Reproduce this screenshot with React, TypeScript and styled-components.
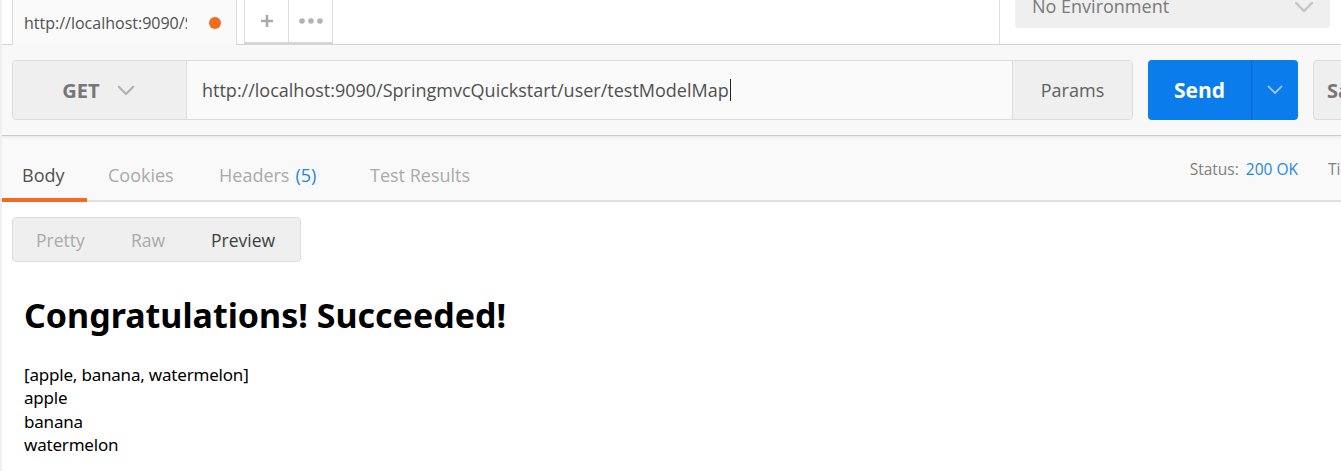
import React from "react";
import styled, { createGlobalStyle } from "styled-components";

const Global = createGlobalStyle`
  html, body { margin: 0; padding: 0; background: #ffffff; }
  body { font-family: "Open Sans", "Noto Sans", sans-serif; overflow: hidden; }
  * { box-sizing: border-box; }
`;

const Page = styled.div`
  width: 1341px;
  height: 471px;
  overflow: hidden;
  background: #fff;
  border-left: 2px solid #f0f0f0;
`;

const TopBar = styled.div`
  height: 45px;
  display: flex;
  align-items: stretch;
  border-bottom: 1px solid #d6d6d6;
  background: #fff;
`;

const TabStrip = styled.div`
  display: flex;
  align-items: stretch;
  padding-left: 10px;
  flex: 0 0 998px;
  border-right: 1px solid #dedede;
`;

const ReqTab = styled.div`
  width: 225px;
  display: flex;
  align-items: center;
  justify-content: space-between;
  padding: 0 15px 0 11px;
  background: #fafafa;
  border: 1px solid #dcdcdc;
  border-top: none;
  border-bottom: none;
  font-size: 16px;
  color: #505050;
  margin-bottom: -1px;
`;

const TabTitle = styled.span`
  width: 163px;
  overflow: hidden;
  white-space: nowrap;
`;

const Dot = styled.span`
  width: 12px;
  height: 12px;
  border-radius: 50%;
  background: #f26b21;
`;

const SmallTab = styled.div<{ $first?: boolean }>`
  width: ${(p) => (p.$first ? 45 : 44)}px;
  margin-left: ${(p) => (p.$first ? 7 : 0)}px;
  display: flex;
  align-items: center;
  justify-content: center;
  border: 1px solid #dcdcdc;
  border-left-width: ${(p) => (p.$first ? 1 : 0)}px;
  border-top: none;
  border-bottom: 2px solid #d6d6d6;
  background: #fff;
  color: #aaaaaa;
`;

const EnvWrap = styled.div`
  flex: 1;
  padding: 0 10px 0 15px;
`;

const EnvSelect = styled.div`
  height: 28px;
  width: 315px;
  background: #efefef;
  border-radius: 0 0 4px 4px;
  display: flex;
  align-items: flex-end;
  justify-content: space-between;
  padding: 0 16px 13px 17px;
  font-size: 18px;
  color: #7a7a7a;
  line-height: 1;
`;

const EnvArrow = styled.span`
  display: flex;
  margin-bottom: 2px;
`;

const RequestArea = styled.div`
  height: 91px;
  background: #f8f8f8;
  border-bottom: 1px solid #cccccc;
  box-shadow: 0 1px 3px rgba(0, 0, 0, 0.08);
  display: flex;
  align-items: flex-start;
  padding: 15px 0 0 10px;
  position: relative;
  z-index: 1;
`;

const UrlGroup = styled.div`
  display: flex;
  flex-shrink: 0;
  height: 60px;
  border: 1px solid #dcdcdc;
  border-radius: 4px;
  overflow: hidden;
`;

const Method = styled.div`
  width: 174px;
  flex-shrink: 0;
  background: #efefef;
  border-right: 1px solid #dcdcdc;
  display: flex;
  align-items: center;
  justify-content: center;
  gap: 17px;
  padding-right: 2px;
  font-size: 20px;
  font-weight: 700;
  color: #777;
`;

const UrlInput = styled.div`
  width: 825px;
  flex-shrink: 0;
  background: #fafafa;
  display: flex;
  align-items: center;
  padding-left: 15px;
  font-size: 18px;
  color: #505050;
`;

const Caret = styled.span`
  display: inline-block;
  width: 1px;
  height: 22px;
  background: #222;
  margin-left: 1px;
`;

const ParamsBtn = styled.div`
  width: 120px;
  flex-shrink: 0;
  background: #efefef;
  border-left: 1px solid #dcdcdc;
  display: flex;
  align-items: center;
  justify-content: center;
  font-size: 18px;
  color: #606060;
`;

const SendBtn = styled.div`
  margin-left: 15px;
  width: 150px;
  flex-shrink: 0;
  height: 60px;
  background: #0b7ceb;
  border-radius: 4px;
  display: flex;
  overflow: hidden;
`;

const SendLabel = styled.div`
  width: 104px;
  display: flex;
  align-items: center;
  justify-content: center;
  font-size: 21px;
  font-weight: 700;
  color: #fff;
  border-right: 1px solid #0a66c4;
`;

const SendArrow = styled.div`
  flex: 1;
  display: flex;
  align-items: center;
  justify-content: center;
`;

const SaveBtn = styled.div`
  margin-left: 15px;
  width: 120px;
  height: 60px;
  background: #efefef;
  border: 1px solid #dcdcdc;
  border-radius: 4px;
  display: flex;
  align-items: center;
  padding-left: 13px;
  font-size: 20px;
  font-weight: 700;
  color: #777;
  flex-shrink: 0;
`;

const RespTabs = styled.div`
  height: 66px;
  background: #f9f9f9;
  border-bottom: 2px solid #e0e0e0;
  display: flex;
  align-items: stretch;
`;

const RespTab = styled.div<{ $active?: boolean; $w: number; $pad: number }>`
  width: ${(p) => p.$w}px;
  display: flex;
  align-items: center;
  padding: 16px 0 0 ${(p) => p.$pad}px;
  font-size: 18px;
  color: ${(p) => (p.$active ? "#505050" : "#aaaaaa")};
  border-bottom: 4px solid ${(p) => (p.$active ? "#f26b21" : "transparent")};
  margin-bottom: -2px;
  white-space: nowrap;
`;

const Count = styled.span`
  color: #1e88e5;
  margin-left: 6px;
`;

const StatusBox = styled.div`
  margin-left: auto;
  display: flex;
  align-items: center;
  padding-top: 2px;
  font-size: 15.5px;
  color: #808080;
  white-space: nowrap;
`;

const StatusValue = styled.span`
  color: #1e88e5;
  margin-left: 7px;
`;

const TimeLabel = styled.span`
  margin-left: 30px;
  width: 13px;
  overflow: hidden;
`;

const Body = styled.div`
  padding: 15px 10px 0;
`;

const Segments = styled.div`
  display: inline-flex;
  height: 45px;
  width: 289px;
  background: #efefef;
  border: 1px solid #dcdcdc;
  border-radius: 4px;
  align-items: center;
  padding-left: 23px;
`;

const Segment = styled.span<{ $active?: boolean; $w: number }>`
  width: ${(p) => p.$w}px;
  font-size: 17.5px;
  color: ${(p) => (p.$active ? "#404040" : "#aaaaaa")};
`;

const Preview = styled.div`
  padding: 16px 12px 0;
  font-family: "Noto Sans", "Open Sans", sans-serif;
  color: #000;
`;

const Heading = styled.h1`
  margin: 17px 0 28px;
  font-size: 34px;
  font-weight: 700;
  line-height: 40px;
`;

const Line = styled.div`
  font-size: 17px;
  line-height: 23.4px;
  letter-spacing: -0.2px;
`;

const Chevron = ({ color, size = 16 }: { color: string; size?: number }) => (
  <svg width={size} height={size * 0.6} viewBox="0 0 20 12" fill="none">
    <path d="M2 2 L10 10 L18 2" stroke={color} strokeWidth="2.4" strokeLinecap="round" strokeLinejoin="round" />
  </svg>
);

export default function App() {
  return (
    <>
      <Global />
      <Page>
        <TopBar>
          <TabStrip>
            <ReqTab>
              <TabTitle>http://localhost:9090/SpringmvcQuickstart/user/testModelMap</TabTitle>
              <Dot />
            </ReqTab>
            <SmallTab $first>
              <svg width="14" height="14" viewBox="0 0 14 14">
                <path d="M7 1 V13 M1 7 H13" stroke="#aaaaaa" strokeWidth="2.6" />
              </svg>
            </SmallTab>
            <SmallTab>
              <svg width="24" height="6" viewBox="0 0 24 6">
                <circle cx="3" cy="3" r="2.8" fill="#b3b3b3" />
                <circle cx="12" cy="3" r="2.8" fill="#b3b3b3" />
                <circle cx="21" cy="3" r="2.8" fill="#b3b3b3" />
              </svg>
            </SmallTab>
          </TabStrip>
          <EnvWrap>
            <EnvSelect>
              <span>No Environment</span>
              <EnvArrow>
                <Chevron color="#c4c4c4" size={20} />
              </EnvArrow>
            </EnvSelect>
          </EnvWrap>
        </TopBar>

        <RequestArea>
          <UrlGroup>
            <Method>
              <span>GET</span>
              <Chevron color="#b0b0b0" size={18} />
            </Method>
            <UrlInput>
              http://localhost:9090/SpringmvcQuickstart/user/testModelMap
              <Caret />
            </UrlInput>
            <ParamsBtn>Params</ParamsBtn>
          </UrlGroup>
          <SendBtn>
            <SendLabel>Send</SendLabel>
            <SendArrow>
              <Chevron color="#9cc6f2" size={16} />
            </SendArrow>
          </SendBtn>
          <SaveBtn>Save</SaveBtn>
        </RequestArea>

        <RespTabs>
          <RespTab $active $w={85} $pad={20}>Body</RespTab>
          <RespTab $w={111} $pad={21}>Cookies</RespTab>
          <RespTab $w={151} $pad={21}>
            Headers<Count>(5)</Count>
          </RespTab>
          <RespTab $w={150} $pad={21}>Test Results</RespTab>
          <StatusBox>
            Status:<StatusValue>200 OK</StatusValue>
            <TimeLabel>Time</TimeLabel>
          </StatusBox>
        </RespTabs>

        <Body>
          <Segments>
            <Segment $w={95}>Pretty</Segment>
            <Segment $w={80}>Raw</Segment>
            <Segment $active $w={80}>Preview</Segment>
          </Segments>
          <Preview>
            <Heading>Congratulations! Succeeded!</Heading>
            <Line>[apple, banana, watermelon]</Line>
            <Line>apple</Line>
            <Line>banana</Line>
            <Line>watermelon</Line>
          </Preview>
        </Body>
      </Page>
    </>
  );
}
